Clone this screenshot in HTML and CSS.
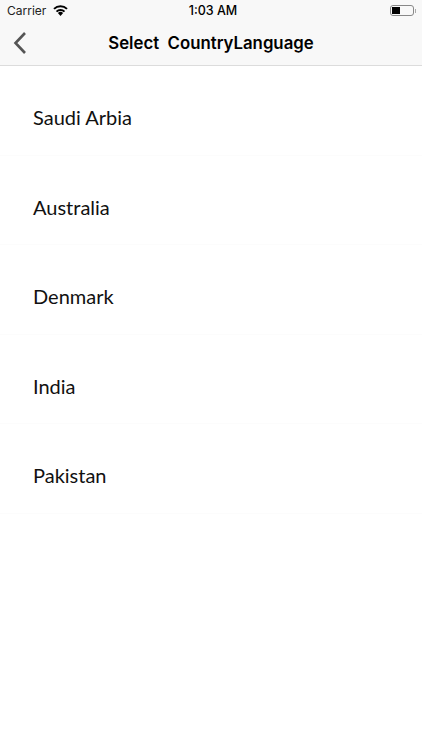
FILE: index.html
```html
<!DOCTYPE html>
<html lang="en">

<head>
    <meta charset="UTF-8">
    <meta name="viewport" content="width=device-width, initial-scale=1.0">
    <title>Select Country Language</title>
    <link rel="stylesheet" href="styles.css">
</head>

<body>
    <div class="top-bar">
        <!-- status bar -->
        <div class="status-bar">
            <div class="status-left">
                <span>Carrier</span>
                <svg class="wifi" width="15" height="11" viewBox="0 0 15 11">
                    <path d="M7.5 11 L4.9 8 A3.8 3.8 0 0 1 10.1 8 Z" fill="#000" />
                    <path d="M3.5 6.6 A5.8 5.8 0 0 1 11.5 6.6" fill="none" stroke="#000" stroke-width="2" />
                    <path d="M1 3.9 A9.4 9.4 0 0 1 14 3.9" fill="none" stroke="#000" stroke-width="2" />
                </svg>
            </div>
            <span class="status-time">1:03 AM</span>
            <div class="battery">
                <div class="battery-body">
                    <div class="battery-level"></div>
                </div>
                <div class="battery-tip"></div>
            </div>
        </div>
        <!-- nav bar -->
        <div class="nav-bar">
            <svg class="back-icon" width="14" height="24" viewBox="0 0 14 24">
                <path d="M12 2 L2.5 12 L12 22" fill="none" stroke="#555" stroke-width="2.6" />
            </svg>
            <span class="nav-title">Select&nbsp; CountryLanguage</span>
        </div>
    </div>
    <div class="country-list">
        <div class="country-item">Saudi Arbia</div>
        <div class="country-item">Australia</div>
        <div class="country-item">Denmark</div>
        <div class="country-item">India</div>
        <div class="country-item">Pakistan</div>
    </div>
</body>

</html>
```
FILE: styles.css
```css
body {
    margin: 0;
    width: 422px;
    height: 750px;
    overflow: hidden;
    background-color: white;
    font-family: Inter, "Liberation Sans", sans-serif;
    color: #000;
}

.top-bar {
    background-color: #f8f8f8;
    border-bottom: 1px solid #dcdcdc;
}

.status-bar {
    display: grid;
    grid-template-columns: 1fr auto 1fr;
    align-items: center;
    height: 21px;
    padding: 0 6px 0 7px;
    font-size: 12.5px;
}

.status-left {
    display: flex;
    align-items: center;
    gap: 7px;
    font-size: 12px;
    color: #222;
}

.status-time {
    margin-left: 3px;
    font-weight: 500;
}

.battery {
    display: flex;
    align-items: center;
    justify-self: end;
    gap: 1px;
}

.battery-body {
    box-sizing: border-box;
    width: 24px;
    height: 11px;
    padding: 1px;
    border: 1px solid #888;
    border-radius: 3px;
}

.battery-level {
    width: 8px;
    height: 100%;
    background-color: #000;
}

.battery-tip {
    width: 1px;
    height: 4px;
    background-color: #aaa;
}

.nav-bar {
    position: relative;
    display: flex;
    justify-content: center;
    align-items: center;
    height: 44px;
}

.back-icon {
    position: absolute;
    left: 13px;
    top: 10px;
}

.nav-title {
    font-size: 16.8px;
    font-weight: 600;
}

.country-item {
    box-sizing: border-box;
    display: flex;
    align-items: center;
    height: 89.5px;
    padding: 14px 0 0 33px;
    font-family: Lato, sans-serif;
    font-size: 20px;
    color: #111;
    border-bottom: 1px solid #fcfcfc;
}
```
